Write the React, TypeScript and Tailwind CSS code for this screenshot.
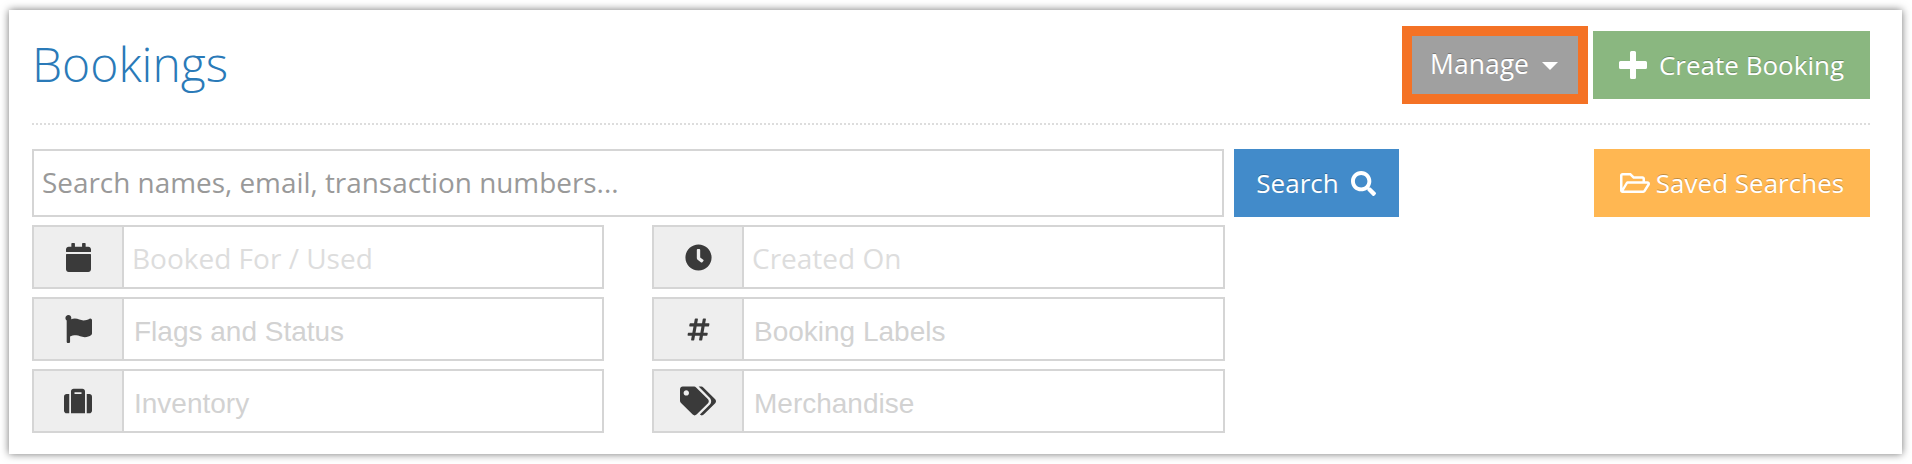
import React from "react";
import { FaCalendar, FaClock, FaFlag, FaHashtag, FaSuitcase, FaTags, FaSearch, FaRegFolderOpen } from "react-icons/fa";

const open = "font-['Open_Sans','Liberation_Sans',sans-serif]";
const arial = "font-['Liberation_Sans',Arial,sans-serif]";
const shadow = "[text-shadow:0_-1px_0_rgba(0,0,0,0.25)]";

type F = { icon: React.ReactNode; label: string; cls: string };

function Field({ icon, label, cls }: F) {
  return (
    <div className="flex h-[64px] border-2 border-[#d5d5d5] bg-white">
      <div className="flex w-[90px] shrink-0 items-center justify-center border-r-2 border-[#d5d5d5] bg-[#eeeeee] text-[#3a3a3a]">
        {icon}
      </div>
      <div className={`flex items-center ${cls}`}>{label}</div>
    </div>
  );
}

function Plus() {
  return (
    <svg width="28" height="28" viewBox="0 0 28 28" fill="currentColor" aria-hidden="true">
      <path d="M11 1.5a1.5 1.5 0 0 1 1.5-1.5h3A1.5 1.5 0 0 1 17 1.5V10h9.5a1.5 1.5 0 0 1 1.5 1.5v5a1.5 1.5 0 0 1-1.5 1.5H17v8.5a1.5 1.5 0 0 1-1.5 1.5h-3a1.5 1.5 0 0 1-1.5-1.5V18H1.5A1.5 1.5 0 0 1 0 16.5v-5A1.5 1.5 0 0 1 1.5 10H11z" />
    </svg>
  );
}

export default function App() {
  const fields: F[] = [
    { icon: <FaCalendar preserveAspectRatio="none" className="h-[29px] w-[25px]" />, label: "Booked For / Used", cls: `pl-[8px] pt-[1px] ${open} text-[28px] text-[#dddddd]` },
    { icon: <FaClock size={27} />, label: "Created On", cls: `pl-[8px] pt-[1px] ${open} text-[28px] text-[#dddddd]` },
    { icon: <FaFlag preserveAspectRatio="none" className="h-[28px] w-[27px]" />, label: "Flags and Status", cls: `pl-[10px] pt-[5px] ${arial} text-[28px] text-[#d2d2d2]` },
    { icon: <FaHashtag size={25} />, label: "Booking Labels", cls: `pl-[10px] pt-[5px] ${arial} text-[28px] text-[#d2d2d2]` },
    { icon: <FaSuitcase size={28} />, label: "Inventory", cls: `pl-[10px] pt-[5px] ${arial} text-[28px] text-[#d2d2d2]` },
    { icon: <FaTags size={36} />, label: "Merchandise", cls: `pl-[10px] pt-[5px] ${arial} text-[28px] text-[#d2d2d2]` },
  ];
  return (
    <div className={`h-[464px] w-[1912px] overflow-hidden bg-white pl-[9px] pt-[10px] ${open}`}>
      <div className="h-[444px] w-[1893px] bg-white pl-[23px] pr-[32px] pt-[16px] shadow-[0_0_8px_rgba(0,0,0,0.55)]">
        <div className="flex h-[99px] items-start justify-between border-b-2 border-dotted border-[#dddddd]">
          <h1 className="mt-[8px] text-[48px] font-light leading-[60px] text-[#2a7ab8]">Bookings</h1>
          <div className="flex items-center gap-[5px]">
            <div className="border-[10px] border-[#f47225]">
              <div className={`flex h-[58px] w-[166px] items-center justify-center gap-[13px] bg-[#a0a0a0] pr-[2px] text-[26.5px] text-white ${shadow}`}>
                Manage
                <span className="mt-[2px] h-0 w-0 border-x-[8px] border-t-[8px] border-x-transparent border-t-white" />
              </div>
            </div>
            <div className={`flex h-[68px] w-[277px] items-center justify-center gap-[12px] bg-[#8ab780] text-[26px] text-white ${shadow}`}>
              <Plus />
              Create Booking
            </div>
          </div>
        </div>
        <div className="mt-[24px] flex items-start">
          <div className="flex h-[68px] w-[1192px] items-center border-2 border-[#d5d5d5] pl-[8px] text-[27.9px] text-[#999999]">
            Search names, email, transaction numbers...
          </div>
          <div className={`ml-[10px] flex h-[68px] w-[165px] items-center justify-center gap-[12px] bg-[#428bca] pr-[1px] text-[26px] text-white ${shadow}`}>
            Search
            <FaSearch size={25} />
          </div>
          <div className={`ml-auto flex h-[68px] w-[276px] items-center justify-center gap-[6px] bg-[#ffb752] text-[26px] text-white ${shadow}`}>
            <FaRegFolderOpen size={30} />
            Saved Searches
          </div>
        </div>
        <div className="mt-[8px] grid w-[1193px] grid-cols-[572px_573px] gap-x-[48px] gap-y-[8px]">
          {fields.map((f) => (
            <Field key={f.label} {...f} />
          ))}
        </div>
      </div>
    </div>
  );
}
